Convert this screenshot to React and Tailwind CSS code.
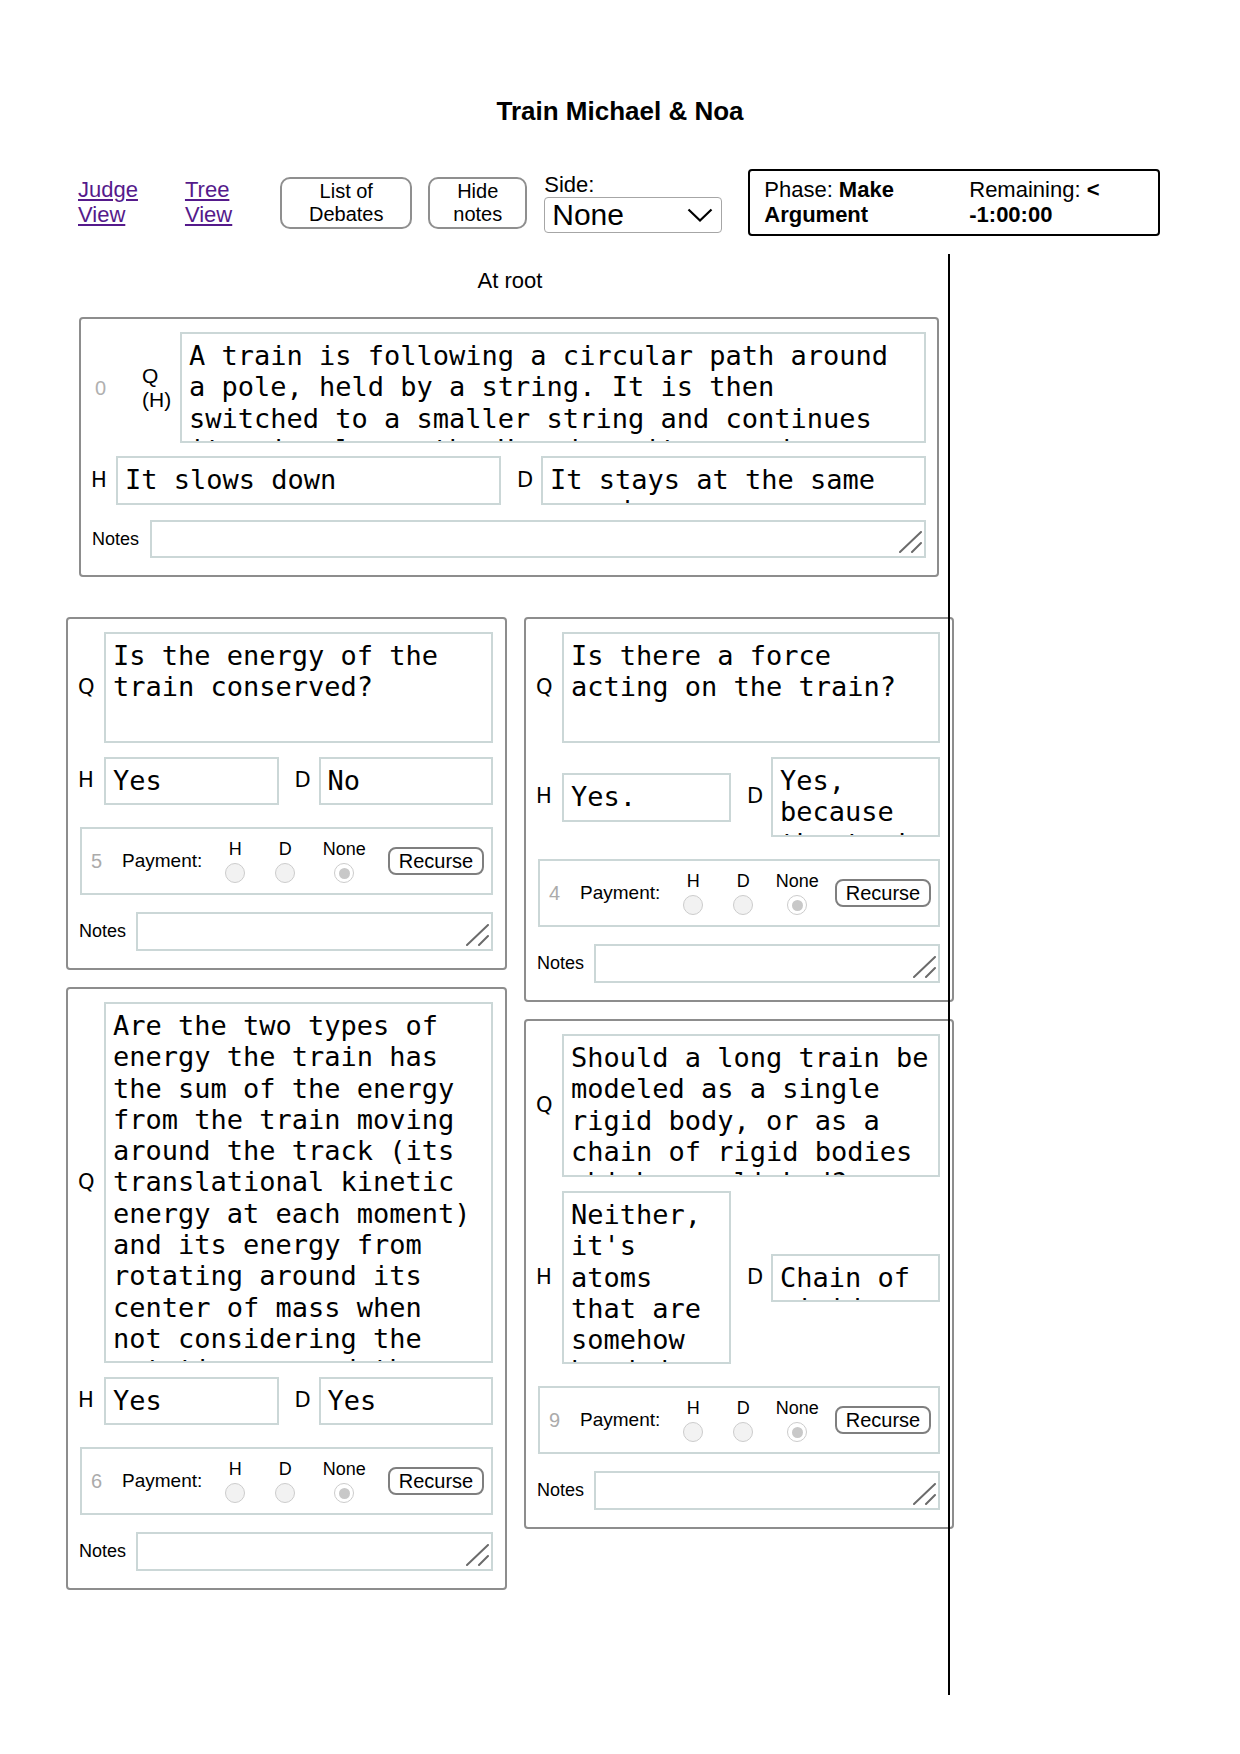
import React from 'react';

const LINE = 'border-[#cbd7d7]';

// resize grip drawn in the corner of the notes boxes
function Grip() {
  return (
    <svg className="absolute right-[2px] bottom-[3px]" width="23" height="22" viewBox="0 0 23 22">
      <path d="M1 21 L22 1 M13 21 L22 12" stroke="#6b6b6b" strokeWidth="2" strokeLinecap="round" fill="none" />
    </svg>
  );
}

function Box({ text = '', className = '', grip = false }) {
  return (
    <div
      className={`relative overflow-hidden border-2 ${LINE} bg-white pl-[7px] pt-[6px] whitespace-pre font-['DejaVu_Sans_Mono',monospace] text-[27px] leading-[31.3px] text-black ${className}`}
    >
      {text}
      {grip && <Grip />}
    </div>
  );
}

function Radio({ label, checked, className = '' }) {
  return (
    <div className={`flex flex-col items-center ${className}`}>
      <span className="text-[18px] leading-[20px]">{label}</span>
      <span
        className={`mt-[4px] w-5 h-5 rounded-full border-[1.5px] border-[#cccccc] flex items-center justify-center ${
          checked ? 'bg-white' : 'bg-[#f2f2f2]'
        }`}
      >
        {checked && <span className="w-[11px] h-[11px] rounded-full bg-[#c8c8c8]" />}
      </span>
    </div>
  );
}

function Payment({ n, narrow }) {
  return (
    <div className={`ml-[12px] flex items-center h-[68px] border-2 ${LINE}`}>
      <span className="ml-[9px] w-[11px] text-[20px] text-[#ababab]">{n}</span>
      <span className="ml-[20px] text-[19px]">Payment:</span>
      <Radio label="H" className="ml-[13px] w-[40px]" />
      <Radio label="D" className="ml-[10px] w-[40px]" />
      <Radio label="None" checked className={`${narrow ? 'ml-[12px]' : 'ml-[17px]'} w-[44px]`} />
      <button className="ml-auto mr-[7px] w-[96px] h-[28px] border-2 border-[#7f7f7f] rounded-[8px] bg-white text-[20px] leading-none">
        Recurse
      </button>
    </div>
  );
}

function Label({ children, className = '' }) {
  return (
    <span className={`shrink-0 font-['DejaVu_Sans',sans-serif] text-[21px] ${className}`}>{children}</span>
  );
}

function Card({ width, q, qH, h, hH, d, dH, n, narrow }) {
  return (
    <div className={`${width} border-2 border-[#8d8d8d] rounded-[4px] pt-[13px] pb-[17px] pr-[12px]`}>
      <div className="flex items-center">
        <Label className="w-[36px] pl-[10px]">Q</Label>
        <Box text={q} className={`flex-1 ${qH}`} />
      </div>
      <div className="mt-[14px] flex items-center">
        <Label className="w-[36px] pl-[10px]">H</Label>
        <Box text={h} className={`flex-1 ${hH}`} />
        <Label className="w-[40px] pl-[16px]">D</Label>
        <Box text={d} className={`flex-1 ${dH}`} />
      </div>
      <div className="mt-[22px]">
        <Payment n={n} narrow={narrow} />
      </div>
      <div className="mt-[17px] flex items-center">
        <span className="w-[68px] shrink-0 pl-[11px] text-[18px]">Notes</span>
        <Box grip className="flex-1 h-[39px]" />
      </div>
    </div>
  );
}

export default function App() {
  return (
    <div className="min-h-[1754px] bg-white text-black font-['Liberation_Sans',Arial,sans-serif]">
      <h1 className="pt-[96px] text-center text-[26px] font-bold leading-[30px]">Train Michael &amp; Noa</h1>

      {/* toolbar */}
      <div className="mt-[43px] h-[67px] flex items-center pl-[78px]">
        <a href="#" className="text-[22px] leading-[24.5px] text-[#551a8b] underline">
          Judge
          <br />
          View
        </a>
        <a href="#" className="ml-[47px] text-[22px] leading-[24.5px] text-[#551a8b] underline">
          Tree
          <br />
          View
        </a>
        <button className="ml-[48px] w-[132px] h-[52px] border-2 border-[#8f8f8f] rounded-[10px] bg-white text-[20px] leading-[23px]">
          List of
          <br />
          Debates
        </button>
        <button className="ml-[16px] w-[99px] h-[52px] border-2 border-[#8f8f8f] rounded-[10px] bg-white text-[20px] leading-[23px]">
          Hide
          <br />
          notes
        </button>
        <div className="ml-[17px] flex flex-col">
          <span className="text-[22px] leading-[25px]">Side:</span>
          <div className="w-[178px] h-[36px] border border-[#a6a6a6] rounded-[4px] flex items-center justify-between pl-[7px] pr-[8px]">
            <span className="text-[30px] leading-none">None</span>
            <svg width="26" height="14" viewBox="0 0 26 14">
              <path d="M1.5 1.5 L13 12.5 L24.5 1.5" fill="none" stroke="#000" strokeWidth="2.2" />
            </svg>
          </div>
        </div>
        <div className="ml-[26px] w-[412px] h-[67px] border-2 border-black rounded-[4px] flex items-center pl-[14px] text-[22px] leading-[24.5px]">
          <div className="w-[205px]">
            Phase: <b>Make</b>
            <br />
            <b>Argument</b>
          </div>
          <div>
            Remaining: <b>&lt;</b>
            <br />
            <b>-1:00:00</b>
          </div>
        </div>
      </div>

      <div className="mt-[18px] flex">
        <div className="ml-[66px] w-[882px] shrink-0">
          <div className="pt-[14px] pl-[6px] text-center text-[22px] leading-[25px]">At root</div>

          {/* root question */}
          <div className="mt-[24px] ml-[13px] w-[860px] border-2 border-[#8d8d8d] rounded-[4px] pt-[13px] pb-[17px] pr-[11px]">
            <div className="flex items-center">
              <span className="ml-[14px] w-[11px] text-[20px] text-[#b0b0b0]">0</span>
              <span className="ml-[36px] w-[30px] text-[21px] leading-[24px]">
                Q
                <br />
                (H)
              </span>
              <Box
                className="ml-[8px] flex-1 h-[111px]"
                text={
                  'A train is following a circular path around\na pole, held by a string. It is then\nswitched to a smaller string and continues\nits circular path. How does its speed'
                }
              />
            </div>
            <div className="mt-[13px] flex items-center">
              <Label className="w-[35px] pl-[10px]">H</Label>
              <Box text="It slows down" className="flex-1 h-[49px]" />
              <Label className="w-[40px] pl-[16px]">D</Label>
              <Box text={'It stays at the same\nspeed'} className="flex-1 h-[49px]" />
            </div>
            <div className="mt-[15px] flex items-center">
              <span className="w-[69px] shrink-0 pl-[11px] text-[18px]">Notes</span>
              <Box grip className="flex-1 h-[38px]" />
            </div>
          </div>

          {/* children */}
          <div className="mt-[40px] flex items-start gap-[17px]">
            <div className="flex flex-col gap-[17px]">
              <Card
                width="w-[441px]"
                q={'Is the energy of the\ntrain conserved?'}
                qH="h-[111px]"
                h="Yes"
                hH="h-[48px]"
                d="No"
                dH="h-[48px]"
                n="5"
              />
              <Card
                width="w-[441px]"
                q={
                  'Are the two types of\nenergy the train has\nthe sum of the energy\nfrom the train moving\naround the track (its\ntranslational kinetic\nenergy at each moment)\nand its energy from\nrotating around its\ncenter of mass when\nnot considering the\nrotation around the'
                }
                qH="h-[361px]"
                h="Yes"
                hH="h-[48px]"
                d="Yes"
                dH="h-[48px]"
                n="6"
              />
            </div>
            <div className="flex flex-col gap-[17px]">
              <Card
                width="w-[430px]"
                narrow
                q={'Is there a force\nacting on the train?'}
                qH="h-[111px]"
                h="Yes."
                hH="h-[49px]"
                d={'Yes,\nbecause\nthe train'}
                dH="h-[80px]"
                n="4"
              />
              <Card
                width="w-[430px]"
                narrow
                q={'Should a long train be\nmodeled as a single\nrigid body, or as a\nchain of rigid bodies\nwhich are linked?'}
                qH="h-[143px]"
                h={"Neither,\nit's\natoms\nthat are\nsomehow\nbonded"}
                hH="h-[173px]"
                d={'Chain of\nrigid'}
                dH="h-[48px]"
                n="9"
              />
            </div>
          </div>
        </div>
        <div className="w-0 h-[1441px] border-l-2 border-black" />
      </div>
    </div>
  );
}
